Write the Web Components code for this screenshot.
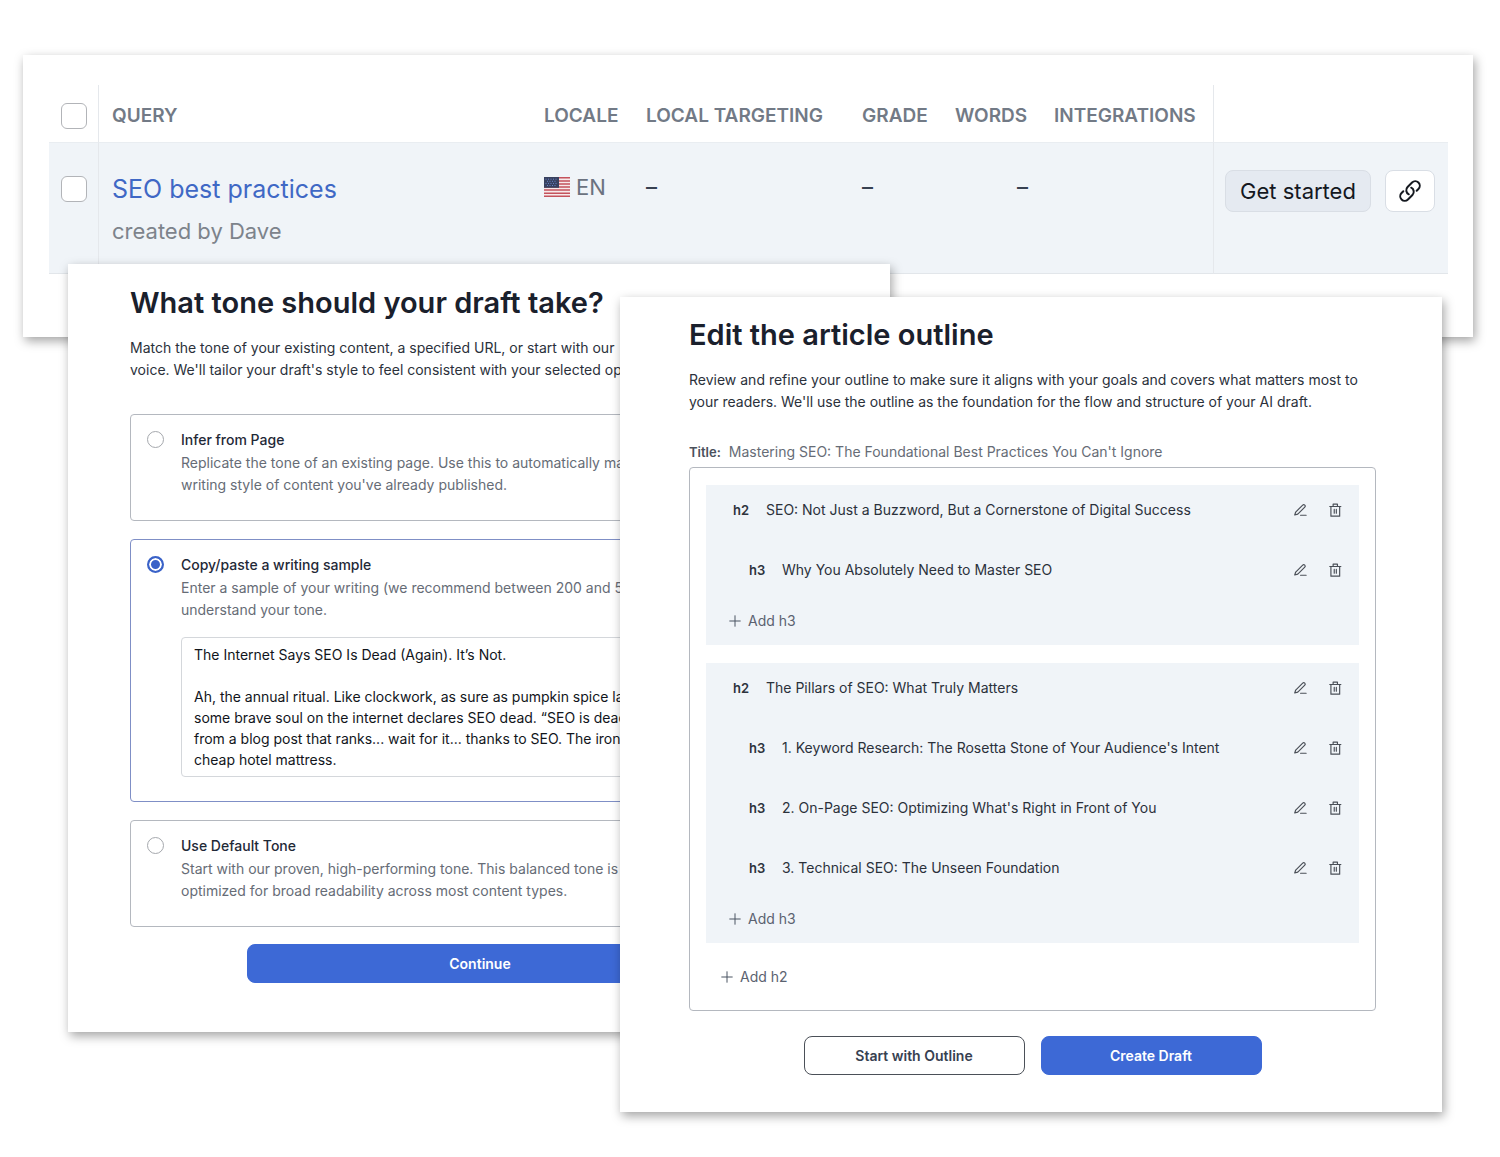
<!DOCTYPE html>
<html lang="en">
<head>
<meta charset="utf-8">
<meta name="viewport" content="width=device-width, initial-scale=1">
<title>Content drafts</title>
<style>
  body {
    margin: 0;
    background: #fff;
    color: #1f2937;
    font: 400 14px/22px Inter, "Liberation Sans", sans-serif;
  }
</style>
</head>
<body>
<draft-workspace></draft-workspace>

<script>
const ICONS = {
  link: `<path d="M13.190 8.688a4.500 4.500 0 0 1 1.242 7.244l-4.500 4.500a4.500 4.500 0 0 1-6.364-6.364l1.757-1.757m13.350-.622 1.757-1.757a4.500 4.500 0 0 0-6.364-6.364l-4.500 4.500a4.500 4.500 0 0 0 1.242 7.244"/>`,
  pen: `<path d="M13 21h9.500"/><path d="M16.600 3.600a2.500 2.500 0 0 1 3.600 3.500L8.200 19 3 20.600l1.600-5.100z"/>`,
  trash: `<path d="M3 6h19"/><path d="M5 6v16.500h15V6"/><path d="M8.800 6V2h7.400v4"/><path d="M10.700 11v6.500M14.300 11v6.500"/>`,
  plus: `<path d="M12 1.500v21M1.500 12h21"/>`,
};

function define(name, html, setup) {
  const template = document.createElement('template');
  template.innerHTML = html;

  customElements.define(name, class extends HTMLElement {
    connectedCallback() {
      if (this.shadowRoot) return;
      this.attachShadow({ mode: 'open' }).appendChild(template.content.cloneNode(true));
      if (setup) setup(this, this.shadowRoot);
    }
  });
}

// <ui-icon name="pen">
define('ui-icon', `
  <style>
    :host { display: inline-flex; width: var(--icon-size, 14px); height: var(--icon-size, 14px); }
    svg {
      width: 100%;
      height: 100%;
      fill: none;
      stroke: currentColor;
      stroke-width: var(--icon-stroke, 2);
      stroke-linecap: round;
      stroke-linejoin: round;
    }
  </style>
  <svg viewBox="0 0 24 24" aria-hidden="true"></svg>
`, (host, root) => {
  root.querySelector('svg').innerHTML = ICONS[host.getAttribute('name')] || '';
});

// <ui-button variant="primary">
define('ui-button', `
  <style>
    :host { display: block; }
    button {
      display: block;
      width: 100%;
      height: 39px;
      padding: 0 16px;
      border: 1px solid #4b5058;
      border-radius: 8px;
      background: #fff;
      color: #374151;
      font: inherit;
      font-weight: 600;
      cursor: pointer;
    }
    :host([variant="primary"]) button {
      border-color: #3d69d6;
      background: #3d69d6;
      color: #fff;
    }
  </style>
  <button type="button"><slot></slot></button>
`);

// "+ Add h3" text button
define('add-button', `
  <style>
    :host { display: block; }
    button {
      display: flex;
      align-items: center;
      gap: 7px;
      height: 32px;
      padding: 0;
      border: 0;
      background: none;
      color: #5b6270;
      font: inherit;
      cursor: pointer;
    }
    ui-icon { --icon-size: 12px; color: #4b5563; }
  </style>
  <button type="button"><ui-icon name="plus"></ui-icon><span><slot></slot></span></button>
`);

define('ui-panel', `
  <style>
    :host {
      display: block;
      box-sizing: border-box;
      background: #fff;
      box-shadow: 2px 4px 10px rgba(0, 0, 0, .36);
    }
  </style>
  <slot></slot>
`);

// heading with a lead paragraph below it
define('panel-heading', `
  <style>
    :host { display: block; }
    h1 {
      margin: 0 0 15px;
      color: #1a202c;
      font-size: 29px;
      font-weight: 600;
      line-height: 38px;
    }
    p { margin: 0; color: #2b313b; }
  </style>
  <h1><slot name="title"></slot></h1>
  <p><slot></slot></p>
`);

define('query-table', `
  <style>
    :host { display: block; }
    table {
      width: 100%;
      border-collapse: separate;
      border-spacing: 0;
      table-layout: fixed;
    }
    th, td {
      box-sizing: border-box;
      padding: 0 0 0 14px;
      text-align: left;
      white-space: nowrap;
    }
    th {
      height: 57px;
      padding-top: 4px;
      color: #727a86;
      font-size: 19px;
      font-weight: 600;
      line-height: 24px;
    }
    td {
      height: 132px;
      padding-top: 27px;
      border-top: 1px solid #e9edf1;
      border-bottom: 1px solid #e2e6ea;
      background: #f0f4f8;
      vertical-align: top;
    }
    .edge { padding-left: 13px; border-left: 1px solid #e5e8ec; }
    .check { width: 49px; padding-left: 12px; }
    .locale { width: 102px; }
    .target { width: 216px; }
    .grade { width: 93px; }
    .words { width: 99px; padding-right: 12px; }
    .tools { width: 173px; }
    .actions { width: 235px; padding-left: 11px; }
    td.words { text-align: right; }
    td.dash { color: #374151; font-size: 22px; font-weight: 500; line-height: 34px; }
    input {
      appearance: none;
      box-sizing: border-box;
      display: block;
      width: 26px;
      height: 26px;
      margin: 0;
      border: 1px solid #b2b4b8;
      border-radius: 6px;
      background: #fff;
    }
    td input { margin-top: 6px; }
    a {
      display: block;
      color: #3f68c5;
      font-size: 25px;
      line-height: 38px;
      text-decoration: none;
    }
    small { display: block; margin-top: 4px; color: #7d838b; font-size: 22px; line-height: 38px; }
    .lang { display: flex; align-items: center; gap: 6px; color: #6b7280; font-size: 22px; line-height: 34px; }
    .lang svg { width: 26px; height: 20px; }
    .buttons { display: flex; gap: 14px; }
    button {
      height: 42px;
      padding: 0;
      border: 1px solid #d9dee5;
      border-radius: 8px;
      color: #14181f;
      font: inherit;
      font-size: 22px;
      cursor: pointer;
    }
    .start { width: 146px; background: #e5eaf1; }
    .copy {
      display: flex;
      align-items: center;
      justify-content: center;
      width: 50px;
      background: #fff;
      --icon-size: 24px;
      --icon-stroke: 2;
    }
  </style>
  <table>
    <thead>
      <tr>
        <th class="check"><input type="checkbox" aria-label="Select all"></th>
        <th class="edge">QUERY</th>
        <th class="locale">LOCALE</th>
        <th class="target">LOCAL TARGETING</th>
        <th class="grade">GRADE</th>
        <th class="words">WORDS</th>
        <th class="tools">INTEGRATIONS</th>
        <th class="edge actions"></th>
      </tr>
    </thead>
    <tbody>
      <tr>
        <td class="check"><input type="checkbox" aria-label="Select query"></td>
        <td class="edge"><a href="#">SEO best practices</a><small>created by Dave</small></td>
        <td><span class="lang">
          <svg viewBox="0 0 26 20" aria-hidden="true">
            <rect width="26" height="20" fill="#f7e9ea"/>
            <path d="M0 .8h26M0 3.900h26M0 7h26M0 10h26M0 13.100h26M0 16.200h26M0 19.200h26" stroke="#c4525c" stroke-width="1.500"/>
            <rect width="15" height="10.800" fill="#38415f"/>
            <path d="M1.500 2.200h12M3 4.300h10M1.500 6.400h12M3 8.500h10" stroke="#6a83cc" stroke-width="1" stroke-dasharray="1 1.500"/>
          </svg>EN</span></td>
        <td class="dash">–</td>
        <td class="dash">–</td>
        <td class="dash words">–</td>
        <td></td>
        <td class="edge actions">
          <div class="buttons">
            <button class="start" type="button">Get started</button>
            <button class="copy" type="button" aria-label="Copy link"><ui-icon name="link"></ui-icon></button>
          </div>
        </td>
      </tr>
    </tbody>
  </table>
`);

define('tone-option', `
  <style>
    :host {
      display: grid;
      grid-template-columns: 17px 1fr;
      column-gap: 17px;
      padding: 14px 16px 24px;
      border: 1px solid #b4b8bf;
      border-radius: 4px;
    }
    :host([selected]) { border-color: #7f8fc6; }
    input {
      appearance: none;
      box-sizing: border-box;
      width: 17px;
      height: 17px;
      margin: 2px 0 0;
      border: 1px solid #a5a8ad;
      border-radius: 50%;
      background: #fff;
    }
    input:checked {
      border: 2px solid #3a62c8;
      background: #3a62c8;
      box-shadow: inset 0 0 0 2px #fff;
    }
    label { color: #1f2937; font-weight: 500; }
    p { grid-column: 2; margin: 1px 0 0; color: #666c76; }
    .extra { grid-column: 2; }
  </style>
  <input type="radio" id="pick">
  <label for="pick"><slot name="label"></slot></label>
  <p><slot></slot></p>
  <div class="extra"><slot name="extra"></slot></div>
`, (host, root) => {
  const input = root.querySelector('input');
  input.checked = host.hasAttribute('selected');
  host.deselect = () => {
    input.checked = false;
    host.removeAttribute('selected');
  };
  input.addEventListener('change', () => {
    host.setAttribute('selected', '');
    host.dispatchEvent(new CustomEvent('tone-picked', { bubbles: true, composed: true }));
  });
});

define('tone-form', `
  <style>
    :host { display: block; padding: 20px 60px 49px 62px; }
    .options { display: grid; gap: 18px; margin: 33px 0 17px; }
    textarea {
      display: block;
      box-sizing: border-box;
      width: 100%;
      height: 140px;
      margin-top: 16px;
      padding: 6px 12px;
      border: 1px solid #d4d7db;
      border-radius: 4px;
      background: #fff;
      color: #11151b;
      font: inherit;
      line-height: 21px;
      resize: none;
      overflow: hidden;
    }
    .submit { width: calc(100% * 2 / 3); margin: 0 auto; }
  </style>
  <panel-heading>
    <span slot="title">What tone should your draft take?</span>
    Match the tone of your existing content, a specified URL, or start with our<br>
    voice. We'll tailor your draft's style to feel consistent with your selected option.
  </panel-heading>
  <div class="options">
    <tone-option>
      <span slot="label">Infer from Page</span>
      Replicate the tone of an existing page. Use this to automatically match<br>
      writing style of content you've already published.
    </tone-option>
    <tone-option selected>
      <span slot="label">Copy/paste a writing sample</span>
      Enter a sample of your writing (we recommend between 200 and 500<br>
      understand your tone.
      <textarea slot="extra" rows="6" aria-label="Writing sample">The Internet Says SEO Is Dead (Again). It’s Not.

Ah, the annual ritual. Like clockwork, as sure as pumpkin spice lattes
some brave soul on the internet declares SEO dead. “SEO is dead”
from a blog post that ranks... wait for it... thanks to SEO. The irony
cheap hotel mattress.</textarea>
    </tone-option>
    <tone-option>
      <span slot="label">Use Default Tone</span>
      Start with our proven, high-performing tone. This balanced tone is<br>
      optimized for broad readability across most content types.
    </tone-option>
  </div>
  <div class="submit"><ui-button variant="primary">Continue</ui-button></div>
`, (host, root) => {
  root.addEventListener('tone-picked', e => {
    root.querySelectorAll('tone-option').forEach(option => {
      if (option !== e.target) option.deselect();
    });
  });
});

// one heading of the outline: <outline-row level="h2">text</outline-row>
define('outline-row', `
  <style>
    :host { display: flex; align-items: center; height: 50px; padding: 0 17px 0 27px; }
    :host([level="h3"]) { padding-left: 43px; }
    b { width: 33px; color: #2d333d; font-size: 13px; font-weight: 600; }
    span { flex: 1; color: #2b313b; }
    .tools { display: flex; gap: 21px; }
    button {
      display: flex;
      padding: 0;
      border: 0;
      background: none;
      color: #4b5058;
      cursor: pointer;
    }
  </style>
  <b></b>
  <span><slot></slot></span>
  <div class="tools">
    <button type="button" aria-label="Edit"><ui-icon name="pen"></ui-icon></button>
    <button type="button" aria-label="Delete"><ui-icon name="trash"></ui-icon></button>
  </div>
`, (host, root) => {
  root.querySelector('b').textContent = host.getAttribute('level');
});

define('outline-group', `
  <style>
    :host { display: grid; gap: 10px; padding-bottom: 8px; background: #f0f4f8; }
    add-button { margin-left: 23px; }
  </style>
  <slot></slot>
  <add-button>Add h3</add-button>
`);

define('outline-form', `
  <style>
    :host { display: block; padding: 19px 66px 37px 69px; }
    .title { display: flex; gap: 8px; margin: 28px 0 4px; color: #666c76; }
    .title b { color: #4b515c; font-size: 13px; font-weight: 600; }
    .outline {
      display: grid;
      gap: 18px;
      padding: 17px 16px;
      border: 1px solid #b4b8bf;
      border-radius: 4px;
    }
    .outline > add-button { margin-left: 15px; }
    .submit {
      display: grid;
      grid-template-columns: 1fr 1fr;
      gap: 16px;
      width: calc(100% * 2 / 3);
      margin: 25px auto 0;
    }
  </style>
  <panel-heading>
    <span slot="title">Edit the article outline</span>
    Review and refine your outline to make sure it aligns with your goals and covers what matters most to your readers. We'll use the outline as the foundation for the flow and structure of your AI draft.
  </panel-heading>
  <div class="title"><b>Title:</b><span>Mastering SEO: The Foundational Best Practices You Can't Ignore</span></div>
  <div class="outline">
    <outline-group>
      <outline-row level="h2">SEO: Not Just a Buzzword, But a Cornerstone of Digital Success</outline-row>
      <outline-row level="h3">Why You Absolutely Need to Master SEO</outline-row>
    </outline-group>
    <outline-group>
      <outline-row level="h2">The Pillars of SEO: What Truly Matters</outline-row>
      <outline-row level="h3">1. Keyword Research: The Rosetta Stone of Your Audience's Intent</outline-row>
      <outline-row level="h3">2. On-Page SEO: Optimizing What's Right in Front of You</outline-row>
      <outline-row level="h3">3. Technical SEO: The Unseen Foundation</outline-row>
    </outline-group>
    <add-button>Add h2</add-button>
  </div>
  <div class="submit">
    <ui-button>Start with Outline</ui-button>
    <ui-button variant="primary">Create Draft</ui-button>
  </div>
`);

// the three panels share one grid row and overlap
define('draft-workspace', `
  <style>
    :host {
      display: grid;
      grid-template-columns: 23fr 45fr 552fr 270fr 552fr 31fr 27fr;
      align-items: start;
      padding-bottom: 45px;
      overflow: hidden;
    }
    ui-panel { grid-row: 1; min-width: 0; }
    .queries { grid-column: 2 / 7; margin-top: 55px; padding: 30px 25px 63px 26px; }
    .tone { grid-column: 3 / 5; margin-top: 264px; }
    .outline { grid-column: 4 / 6; margin-top: 297px; }
  </style>
  <ui-panel class="queries"><query-table></query-table></ui-panel>
  <ui-panel class="tone"><tone-form></tone-form></ui-panel>
  <ui-panel class="outline"><outline-form></outline-form></ui-panel>
`);
</script>
</body>
</html>
